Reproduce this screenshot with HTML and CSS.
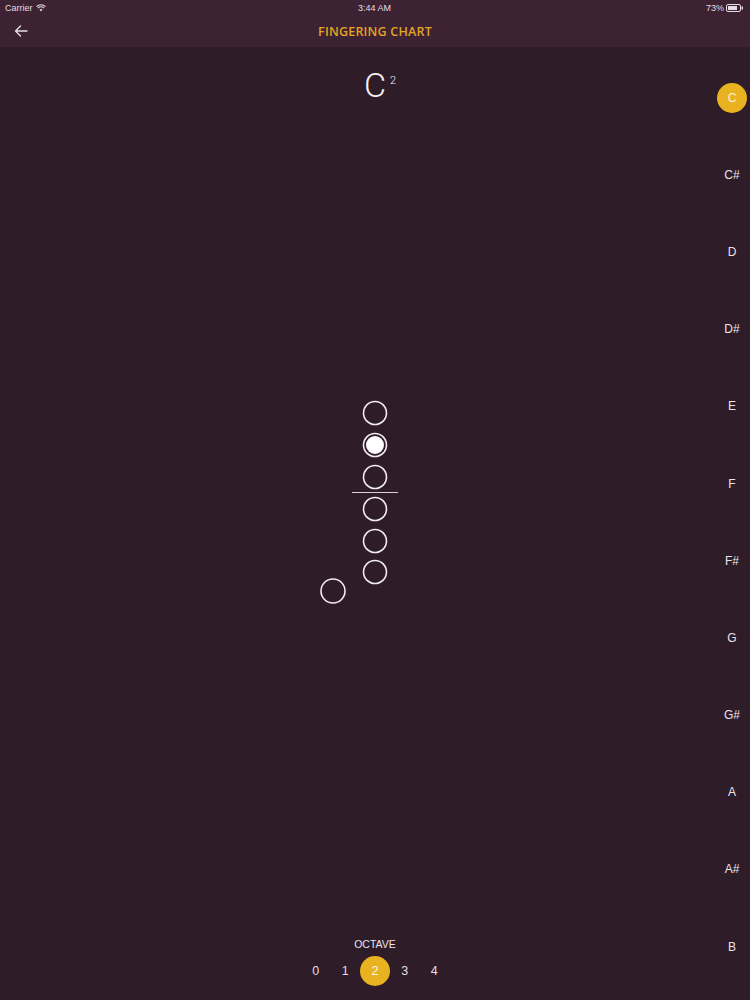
FILE: index.html
```html
<!DOCTYPE html>
<html>
<head>
<meta charset="utf-8">
<link rel="stylesheet" href="styles.css">
</head>
<body>
<div class="page">
  <header class="header">
    <div class="status">
      <div class="status-left">Carrier
        <svg class="wifi" width="10" height="8" viewBox="0 0 10 8"><path d="M5 7.5 L3.4 5.6 A2.4 2.4 0 0 1 6.6 5.6 Z" fill="#e6dce3"/><path d="M1.9 4.1 A4.4 4.4 0 0 1 8.1 4.1" stroke="#e6dce3" stroke-width="1.1" fill="none"/><path d="M0.5 2.6 A6.4 6.4 0 0 1 9.5 2.6" stroke="#e6dce3" stroke-width="1.1" fill="none"/></svg>
      </div>
      <div class="status-center">3:44 AM</div>
      <div class="status-right">73%
        <svg width="18" height="8" viewBox="0 0 18 8"><rect x="0.5" y="0.5" width="14" height="7" rx="1.5" stroke="#e6dce3" fill="none"/><rect x="2" y="2" width="9" height="4" fill="#e6dce3"/><rect x="15.5" y="2.5" width="1.5" height="3" fill="#e6dce3"/></svg>
      </div>
    </div>
    <div class="nav">
      <svg class="back" width="14" height="12" viewBox="0 0 14 12"><path d="M13 6 H1.5 M6.5 1 L1.5 6 L6.5 11" stroke="#e6dce3" stroke-width="1.4" fill="none" stroke-linecap="round" stroke-linejoin="round"/></svg>
      <div class="nav-title">FINGERING CHART</div>
    </div>
  </header>
  <main class="main">
    <div class="spacer"></div>
    <section class="center">
      <div class="note-title">C<sup class="octave-sup">2</sup></div>
      <svg class="diagram" width="110" height="210" viewBox="320 398 110 210">
        <g fill="none" stroke="#f2ecf0" stroke-width="1.6">
          <circle cx="375" cy="413" r="11.5"/>
          <circle cx="375" cy="445" r="11.5"/>
          <circle cx="375" cy="477" r="11.5"/>
          <circle cx="375" cy="509" r="11.5"/>
          <circle cx="375" cy="541" r="11.5"/>
          <circle cx="375" cy="572" r="11.5"/>
          <circle cx="333" cy="591" r="12"/>
        </g>
        <circle cx="375" cy="445" r="9" fill="#ffffff"/>
        <line x1="352" y1="492.5" x2="398" y2="492.5" stroke="#d9cfd6" stroke-width="1"/>
      </svg>
      <div class="octave">
        <div class="octave-label">OCTAVE</div>
        <div class="octave-row">
          <span class="oct">0</span>
          <span class="oct">1</span>
          <span class="oct active">2</span>
          <span class="oct">3</span>
          <span class="oct">4</span>
        </div>
      </div>
    </section>
    <nav class="notes">
      <span class="note active">C</span>
      <span class="note">C#</span>
      <span class="note">D</span>
      <span class="note">D#</span>
      <span class="note">E</span>
      <span class="note">F</span>
      <span class="note">F#</span>
      <span class="note">G</span>
      <span class="note">G#</span>
      <span class="note">A</span>
      <span class="note">A#</span>
      <span class="note">B</span>
    </nav>
  </main>
</div>
</body>
</html>
```

FILE: styles.css
```css
* { box-sizing: border-box; }
html, body { margin: 0; padding: 0; }
body {
  width: 750px;
  height: 1000px;
  background: #2e1c28;
  font-family: "Liberation Sans", Arial, sans-serif;
  color: #ece4ea;
  overflow: hidden;
}
.page {
  display: flex;
  flex-direction: column;
  height: 1000px;
}
.header {
  background: #3d2233;
  height: 47px;
  flex: none;
}
.status {
  height: 15px;
  display: grid;
  grid-template-columns: 1fr auto 1fr;
  align-items: center;
  font-size: 9px;
  color: #e6dce3;
  padding: 0 6px 0 5px;
}
.status-left { display: flex; align-items: center; gap: 3px; }
.status-center { text-align: center; }
.status-right { display: flex; align-items: center; justify-content: flex-end; gap: 2px; }
.nav {
  height: 32px;
  display: flex;
  align-items: center;
  justify-content: center;
  position: relative;
}
.back {
  position: absolute;
  left: 14px;
  top: 10px;
}
.nav-title {
  color: #e3a422;
  font-family: "Open Sans", sans-serif;
  font-weight: 600;
  font-size: 12.5px;
  letter-spacing: 0.2px;
}
.main {
  flex: 1;
  display: grid;
  grid-template-columns: 36px 1fr 36px;
}
.center {
  display: flex;
  flex-direction: column;
  align-items: center;
}
.note-title {
  margin-top: 20px;
  font-family: Roboto, sans-serif;
  font-weight: 300;
  font-size: 34px;
  line-height: 36px;
  color: #f4eff2;
  padding-left: 10px;
}
.octave-sup {
  font-size: 11px;
  vertical-align: top;
  position: relative;
  top: -4px;
  margin-left: 4px;
}
.diagram {
  display: block;
  margin-top: 295px;
}
.octave {
  margin-top: 329px;
  display: flex;
  flex-direction: column;
  align-items: center;
}
.octave-label {
  font-family: "Liberation Sans", Arial, sans-serif;
  font-size: 10.5px;
  color: #ece4ea;
  line-height: 14px;
}
.octave-row {
  margin-top: 5px;
  display: flex;
}
.oct {
  width: 29.5px;
  height: 30px;
  display: flex;
  align-items: center;
  justify-content: center;
  font-size: 12.5px;
  color: #e6dde3;
}
.oct.active {
  background: #e8b221;
  border-radius: 50%;
  width: 30px;
  color: #fff6e0;
}
.notes {
  display: flex;
  flex-direction: column;
  align-items: center;
  padding-top: 12px;
}
.note {
  height: 77.2px;
  display: flex;
  align-items: center;
  justify-content: center;
  font-size: 12px;
  color: #ece4ea;
  width: 30px;
}
.note.active {
  position: relative;
  z-index: 0;
  color: #fff3d6;
}
.note.active::before {
  content: "";
  position: absolute;
  width: 30px;
  height: 30px;
  border-radius: 50%;
  background: #e8b221;
  left: 0;
  top: 23.6px;
  z-index: -1;
}
```
